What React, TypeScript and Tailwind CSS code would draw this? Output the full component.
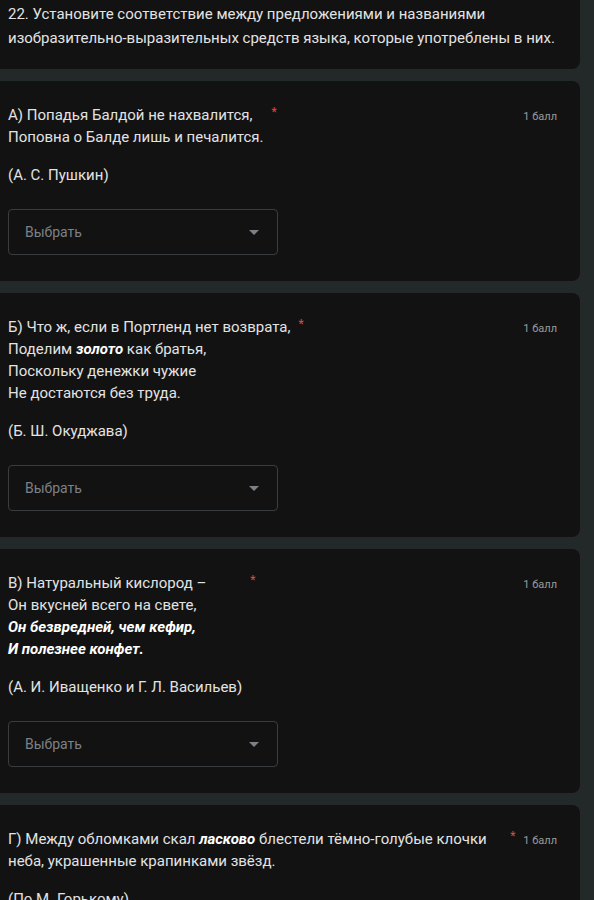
import { ReactNode } from "react";

interface Question {
  id: string;
  lines: ReactNode[];
  author: string;
}

const questions: Question[] = [
  {
    id: "a",
    lines: ["А) Попадья Балдой не нахвалится,", "Поповна о Балде лишь и печалится."],
    author: "(А. С. Пушкин)",
  },
  {
    id: "b",
    lines: [
      "Б) Что ж, если в Портленд нет возврата,",
      <>
        Поделим <b className="font-bold italic text-white">золото</b> как братья,
      </>,
      "Поскольку денежки чужие",
      "Не достаются без труда.",
    ],
    author: "(Б. Ш. Окуджава)",
  },
  {
    id: "c",
    lines: [
      "В) Натуральный кислород –",
      "Он вкусней всего на свете,",
      <b className="font-bold italic text-white">Он безвредней, чем кефир,</b>,
      <b className="font-bold italic text-white">И полезнее конфет.</b>,
    ],
    author: "(А. И. Иващенко и Г. Л. Васильев)",
  },
  {
    id: "d",
    lines: [
      <>
        Г) Между обломками скал <b className="font-bold italic text-white">ласково</b> блестели тёмно-голубые клочки
        неба, украшенные крапинками звёзд.
      </>,
    ],
    author: "(По М. Горькому)",
  },
];

function Select() {
  return (
    <div className="mt-[23px] flex h-[46px] w-[270px] items-center justify-between rounded border border-[#3a3d40] pl-4 pr-[18px]">
      <span className="text-[14px] text-[#7d8185]">Выбрать</span>
      <svg viewBox="0 0 10 5" className="h-[5px] w-[10px]" aria-hidden="true">
        <path d="M0 0 L10 0 L5 5 Z" fill="#7d8185" />
      </svg>
    </div>
  );
}

function QuestionCard({ question }: { question: Question }) {
  return (
    <div className="rounded-r-lg bg-[#121212] pb-[26px] pl-2 pr-[23px] pt-[23px]">
      <div className="flex items-start">
        <div className="min-w-0">
          {question.lines.map((line, index) => (
            <div key={index} className="text-[15px] leading-[22px] text-[#e3e3e3]">
              {line}
            </div>
          ))}
          <div className="mt-4 text-[15px] leading-[22px] text-[#e3e3e3]">{question.author}</div>
        </div>
        <span className="ml-2 shrink-0 text-[12px] leading-[16px] text-[#e04a3f]">*</span>
        <span className="flex-1" />
        <span className="ml-2 mt-[2px] shrink-0 text-[11px] leading-[22px] text-[#9a9a9a]">1 балл</span>
      </div>
      <Select />
    </div>
  );
}

export default function App() {
  return (
    <div
      className="min-h-[900px] w-[594px] overflow-hidden bg-[#232928] pr-[14px]"
      style={{ fontFamily: "Roboto, 'Liberation Sans', sans-serif" }}
    >
      <div className="flex flex-col gap-[12px]">
        <div className="rounded-br-lg bg-[#121212] pb-[19px] pl-2 pr-6 pt-[2px]">
          <p className="text-[15px] leading-6 text-[#e3e3e3]">
            22. Установите соответствие между предложениями и названиями изобразительно-выразительных средств
            языка, которые употреблены в них.
          </p>
        </div>
        {questions.map((question) => (
          <QuestionCard key={question.id} question={question} />
        ))}
      </div>
    </div>
  );
}
